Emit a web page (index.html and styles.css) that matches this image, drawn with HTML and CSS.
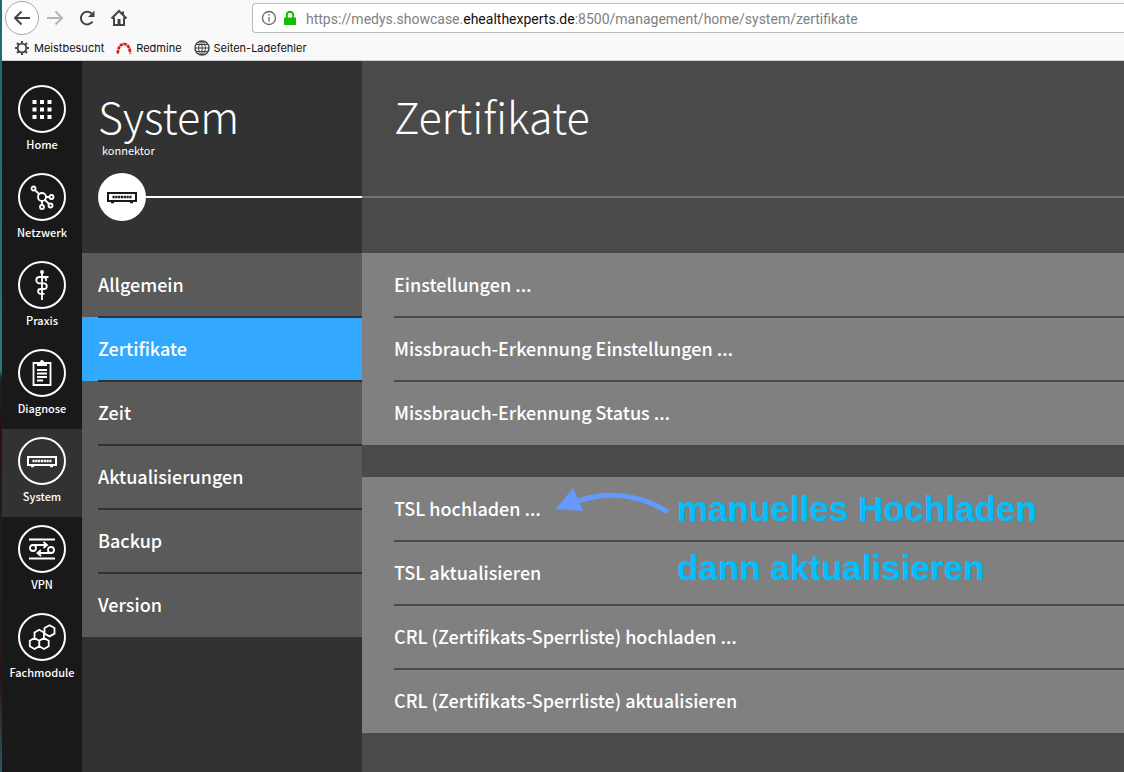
FILE: index.html
```
<!DOCTYPE html>
<html lang="de">
<head>
<meta charset="utf-8">
<meta name="viewport" content="width=device-width, initial-scale=1">
<title>Zertifikate</title>
<link rel="stylesheet" href="styles.css">
</head>
<body>
<svg class="defs" aria-hidden="true">
  <symbol id="device" viewBox="0 0 32 32">
    <path d="M2 12h28v8H2z" fill="none" stroke="currentColor" stroke-width="2"/>
    <path d="M6.500 16h19" stroke="currentColor" stroke-width="2.400" stroke-dasharray="2.200 0.600"/>
    <path d="M5 21.500h3M24 21.500h3" stroke="currentColor" stroke-width="1.500"/>
  </symbol>
</svg>
<div class="window">
  <header class="browser">
    <div class="toolbar">
      <button class="tool back" aria-label="Zurück"><svg viewBox="0 0 18 18"><path d="M17 9H2M8.500 2.500L2 9l6.500 6.500"/></svg></button>
      <button class="tool forward" aria-label="Vor"><svg viewBox="0 0 18 18"><path d="M1 9h15M9.500 2.500L16 9l-6.500 6.500"/></svg></button>
      <button class="tool" aria-label="Neu laden"><svg viewBox="0 0 18 18"><path d="M14.500 12.500A6.300 6.300 0 1 1 13.500 4.500"/><path d="M16.500 1.500v6.500H10z" class="solid"/></svg></button>
      <button class="tool" aria-label="Startseite"><svg viewBox="0 0 18 18"><path d="M1.500 9.500L9 2l7.500 7.500M4 8.500V16h10V8.500M13 2.500v3"/><path d="M7.500 10h3v6h-3z" class="solid"/></svg></button>
      <div class="address">
        <svg class="info" viewBox="0 0 16 16" aria-hidden="true"><circle cx="8" cy="8" r="6.500"/><path d="M8 7v4.500M8 4.200v1.600"/></svg>
        <svg class="lock" viewBox="0 0 14 16" aria-hidden="true"><path d="M1 7.500h12V15H1z" class="body"/><path d="M3.800 8V5a3.200 3.200 0 0 1 6.400 0v3"/></svg>
        <span class="url">https://medys.showcase.<b>ehealthexperts.de</b>:8500/management/home/system/zertifikate</span>
      </div>
    </div>
    <nav class="bookmarks" aria-label="Lesezeichen">
      <a href="#"><svg viewBox="0 0 16 16"><circle cx="8" cy="8" r="4.300" stroke-width="1.800"/><path stroke-width="2" d="M8 1v3M8 12v3M1 8h3M12 8h3M3 3l2 2M11 11l2 2M3 13l2-2M11 5l2-2"/></svg>Meistbesucht</a>
      <a href="#"><svg viewBox="0 0 16 16" class="red"><path d="M1.800 13.500C2 9 3.500 4 8 4s6 5 6.200 9.500" stroke-width="2.600" stroke-dasharray="3.300 0.700"/></svg>Redmine</a>
      <a href="#"><svg viewBox="0 0 16 16"><circle cx="8" cy="8" r="7" stroke-width="1.500"/><path stroke-width="1" d="M8 1v14M1 8h14M2.500 4.500h11M2.500 11.500h11M8 1C3.500 4 3.500 12 8 15M8 1c4.500 3 4.500 11 0 14"/></svg>Seiten-Ladefehler</a>
    </nav>
  </header>
  <div class="app">
    <nav class="rail" aria-label="Bereiche">
      <a href="#"><span class="ring"><svg viewBox="0 0 32 32"><path class="fill" d="M6.500 7h4v4h-4zM14 7h4v4h-4zM21.500 7h4v4h-4zM6.500 14.500h4v4h-4zM14 14.500h4v4h-4zM21.500 14.500h4v4h-4zM6.500 22h4v4h-4zM14 22h4v4h-4zM21.500 22h4v4h-4z"/></svg></span>Home</a>
      <a href="#"><span class="ring"><svg viewBox="0 0 32 32"><circle cx="16" cy="16" r="4"/><circle cx="7.500" cy="7.500" r="2"/><circle cx="25.500" cy="16" r="2"/><circle cx="24.500" cy="24.500" r="2"/><circle cx="16" cy="26" r="2"/><path d="M9 9l4 4M20 16h3.500M19 19l4 4M16 20v4"/></svg></span>Netzwerk</a>
      <a href="#"><span class="ring"><svg viewBox="0 0 32 32"><circle cx="16" cy="3" r="2" class="fill"/><path d="M16 2v29"/><path d="M22.500 8H13.500a3.200 3.200 0 0 0 0 6.400H18a2.800 2.800 0 0 1 0 5.600h-3.500a2.400 2.400 0 0 0 0 4.800H18.500M16 8c3 0 5 1.500 4 4"/></svg></span>Praxis</a>
      <a href="#"><span class="ring"><svg viewBox="0 0 32 32"><path d="M12 6H7.500v22h17V6H20"/><path class="fill" d="M11 5h3a2 2 0 0 1 4 0h3v4H11z"/><path d="M11 13h10M11 16.500h10M11 20h10M11 23.500h6"/></svg></span>Diagnose</a>
      <a href="#" class="active" aria-current="page"><span class="ring"><svg><use href="#device"/></svg></span>System</a>
      <a href="#"><span class="ring"><svg viewBox="0 0 32 32"><path d="M3 6.500h26M3 25.500h26"/><circle cx="7" cy="15" r="3"/><circle cx="25" cy="17" r="3"/><path d="M6 12h15M17.500 9l3.500 3-3.500 3M26 20H12M15 17l-3.500 3 3.500 3"/></svg></span>VPN</a>
      <a href="#"><span class="ring"><svg viewBox="0 0 32 32"><path d="M8.500 17l4.700 2.700v5.600L8.500 28l-4.700-2.700v-5.600zM18 17l4.700 2.700v5.600L18 28l-4.700-2.700v-5.600zM13.200 8.800l4.700 2.700V17l-4.700 2.700L8.500 17v-5.500zM23.500 4.200l5 2.800v5.600l-5 2.800-5-2.800V7z"/></svg></span>Fachmodule</a>
    </nav>
    <section class="side">
      <header class="head">
        <h1>System</h1>
        <p class="sub">konnektor</p>
        <div class="track"><span class="badge"><svg><use href="#device"/></svg></span></div>
      </header>
      <nav class="menu" aria-label="System">
        <a href="#">Allgemein</a>
        <a href="#" class="active" aria-current="page">Zertifikate</a>
        <a href="#">Zeit</a>
        <a href="#">Aktualisierungen</a>
        <a href="#">Backup</a>
        <a href="#">Version</a>
      </nav>
    </section>
    <main class="main">
      <header class="head">
        <h1>Zertifikate</h1>
        <div class="track"></div>
      </header>
      <div class="group">
        <button>Einstellungen <i>…</i></button>
        <button>Missbrauch-Erkennung Einstellungen <i>…</i></button>
        <button>Missbrauch-Erkennung Status <i>…</i></button>
      </div>
      <div class="group">
        <button>TSL hochladen <i>…</i></button>
        <button>TSL aktualisieren</button>
        <button>CRL (Zertifikats-Sperrliste) hochladen <i>…</i></button>
        <button>CRL (Zertifikats-Sperrliste) aktualisieren</button>
        <div class="note">
          <svg viewBox="0 0 116 32" aria-hidden="true"><path d="M22 14C48 5 80 5 112 25" fill="none" stroke="#6699ff" stroke-width="5"/><path d="M0 22L17 1l10 23z" fill="#6699ff"/></svg>
          <p>manuelles Hochladen<br>dann aktualisieren</p>
        </div>
      </div>
    </main>
  </div>
</div>
</body>
</html>
```
FILE: styles.css
```
* { box-sizing: border-box; }
body {
  margin: 0;
  background: #323232;
  color: #fff;
  font-family: "Noto Sans CJK SC", "Open Sans", sans-serif;
}
h1, p { margin: 0; }
a { color: inherit; text-decoration: none; }
button { border: 0; padding: 0; background: none; color: inherit; font: inherit; text-align: left; }
.defs { position: absolute; width: 0; height: 0; }
.window {
  display: flex;
  flex-direction: column;
  min-height: 100vh;
  padding-left: 2px;
  background: linear-gradient(#256a6a 0, #2f7474 48%, #12282c 49%, #2c0d18 55%, #16252b 75%, #301018 88%, #2a5a60 100%);
}

.browser {
  background: #f9f9f9;
  border-bottom: 1px solid #d0d0d0;
  color: #111;
  overflow: hidden;
}
.toolbar { display: flex; align-items: center; height: 36px; padding-left: 3px; }
.tool { display: flex; align-items: center; justify-content: center; width: 32px; height: 32px; }
.tool svg { width: 18px; height: 18px; fill: none; stroke: #444; stroke-width: 2; }
.tool .solid { fill: #444; stroke: none; }
.back { width: 34px; height: 34px; border: 1px solid #aaa; border-radius: 50%; background: #fff; }
.forward svg { stroke: #b5b5b5; }
.address {
  display: flex;
  align-items: center;
  flex: 1;
  height: 30px;
  margin-left: 117px;
  padding-left: 8px;
  background: #fff;
  border: 1px solid #bbb;
  border-right: 0;
  border-radius: 4px 0 0 4px;
  white-space: nowrap;
}
.info { width: 16px; height: 16px; fill: none; stroke: #666; stroke-width: 1.3; }
.lock { width: 14px; height: 16px; margin: 0 9px 0 6px; fill: none; stroke: #12bc00; stroke-width: 2; }
.lock .body { fill: #12bc00; stroke: none; }
.url { color: #808080; font: 14px/18px Roboto, sans-serif; padding-top: 2px; }
.url b { color: #111; font-weight: 400; }
.bookmarks { display: flex; gap: 12px; height: 24px; padding-left: 12px; }
.bookmarks a { display: flex; align-items: center; gap: 4px; font: 11px Inter, sans-serif; }
.bookmarks svg { width: 16px; height: 16px; fill: none; stroke: #444; }
.bookmarks .red { stroke: #d4151c; }

.app { display: flex; flex: 1; }
.rail { width: 80px; flex: none; padding-top: 16px; background: #191919; }
.rail a {
  display: flex;
  flex-direction: column;
  align-items: center;
  height: 88px;
  padding-top: 8px;
  font-size: 11px;
  font-weight: 500;
  line-height: 22px;
}
.rail .active { background: #323232; }
.ring {
  display: flex;
  align-items: center;
  justify-content: center;
  width: 48px;
  height: 48px;
  border: 2px solid #fff;
  border-radius: 50%;
}
.ring svg, .badge svg { width: 32px; height: 32px; }
.ring svg { fill: none; stroke: #fff; stroke-width: 1.8; }
.ring .fill { fill: #fff; stroke: none; }

.side { width: 280px; flex: none; background: #323232; }
.head { display: flex; flex-direction: column; height: 192px; padding: 28px 0 32px 16px; }
h1 { font-size: 43px; font-weight: 300; line-height: 52px; }
.sub { padding-left: 4px; font-size: 11px; line-height: 18px; }
.track { display: flex; align-items: center; height: 48px; margin-top: auto; }
.track::after { content: ""; flex: 1; height: 2px; background: #fff; }
.badge {
  display: flex;
  align-items: center;
  justify-content: center;
  width: 48px;
  height: 48px;
  border-radius: 50%;
  background: #fff;
  color: #191919;
}
.menu a, .group button {
  display: block;
  position: relative;
  width: 100%;
  height: 64px;
  padding-bottom: 2px;
  font-size: 18px;
  font-weight: 500;
  line-height: 62px;
}
.menu a { padding-left: 16px; background: #5a5a5a; }
.menu .active { background: #33a8ff; }
.menu a:not(:last-child)::after, .group button:not(:nth-last-of-type(1))::after {
  content: "";
  position: absolute;
  z-index: 1;
  left: 16px;
  right: 0;
  bottom: -1px;
  height: 2px;
  background: #323232;
}

.main { flex: 1; min-width: 0; background: #4a4a4a; }
.main .head { padding-left: 32px; }
.main .track { margin-left: -32px; }
.main .track::after { background: #747474; }
.group { position: relative; margin-bottom: 32px; background: #808080; }
.group button { padding-left: 32px; }
.group button:not(:nth-last-of-type(1))::after { left: 32px; background: #4a4a4a; }
.group i { font-family: "Open Sans", sans-serif; font-size: 20px; font-style: normal; font-weight: 600; line-height: 1; }
.note {
  position: absolute;
  z-index: 2;
  left: 194px;
  top: 2px;
  display: flex;
  align-items: flex-start;
  gap: 5px;
  pointer-events: none;
}
.note svg { width: 116px; height: 32px; margin-top: 8px; }
.note p {
  color: #00bfff;
  font: 700 35px/59px "Liberation Sans", Arial, sans-serif;
  white-space: nowrap;
}
```
